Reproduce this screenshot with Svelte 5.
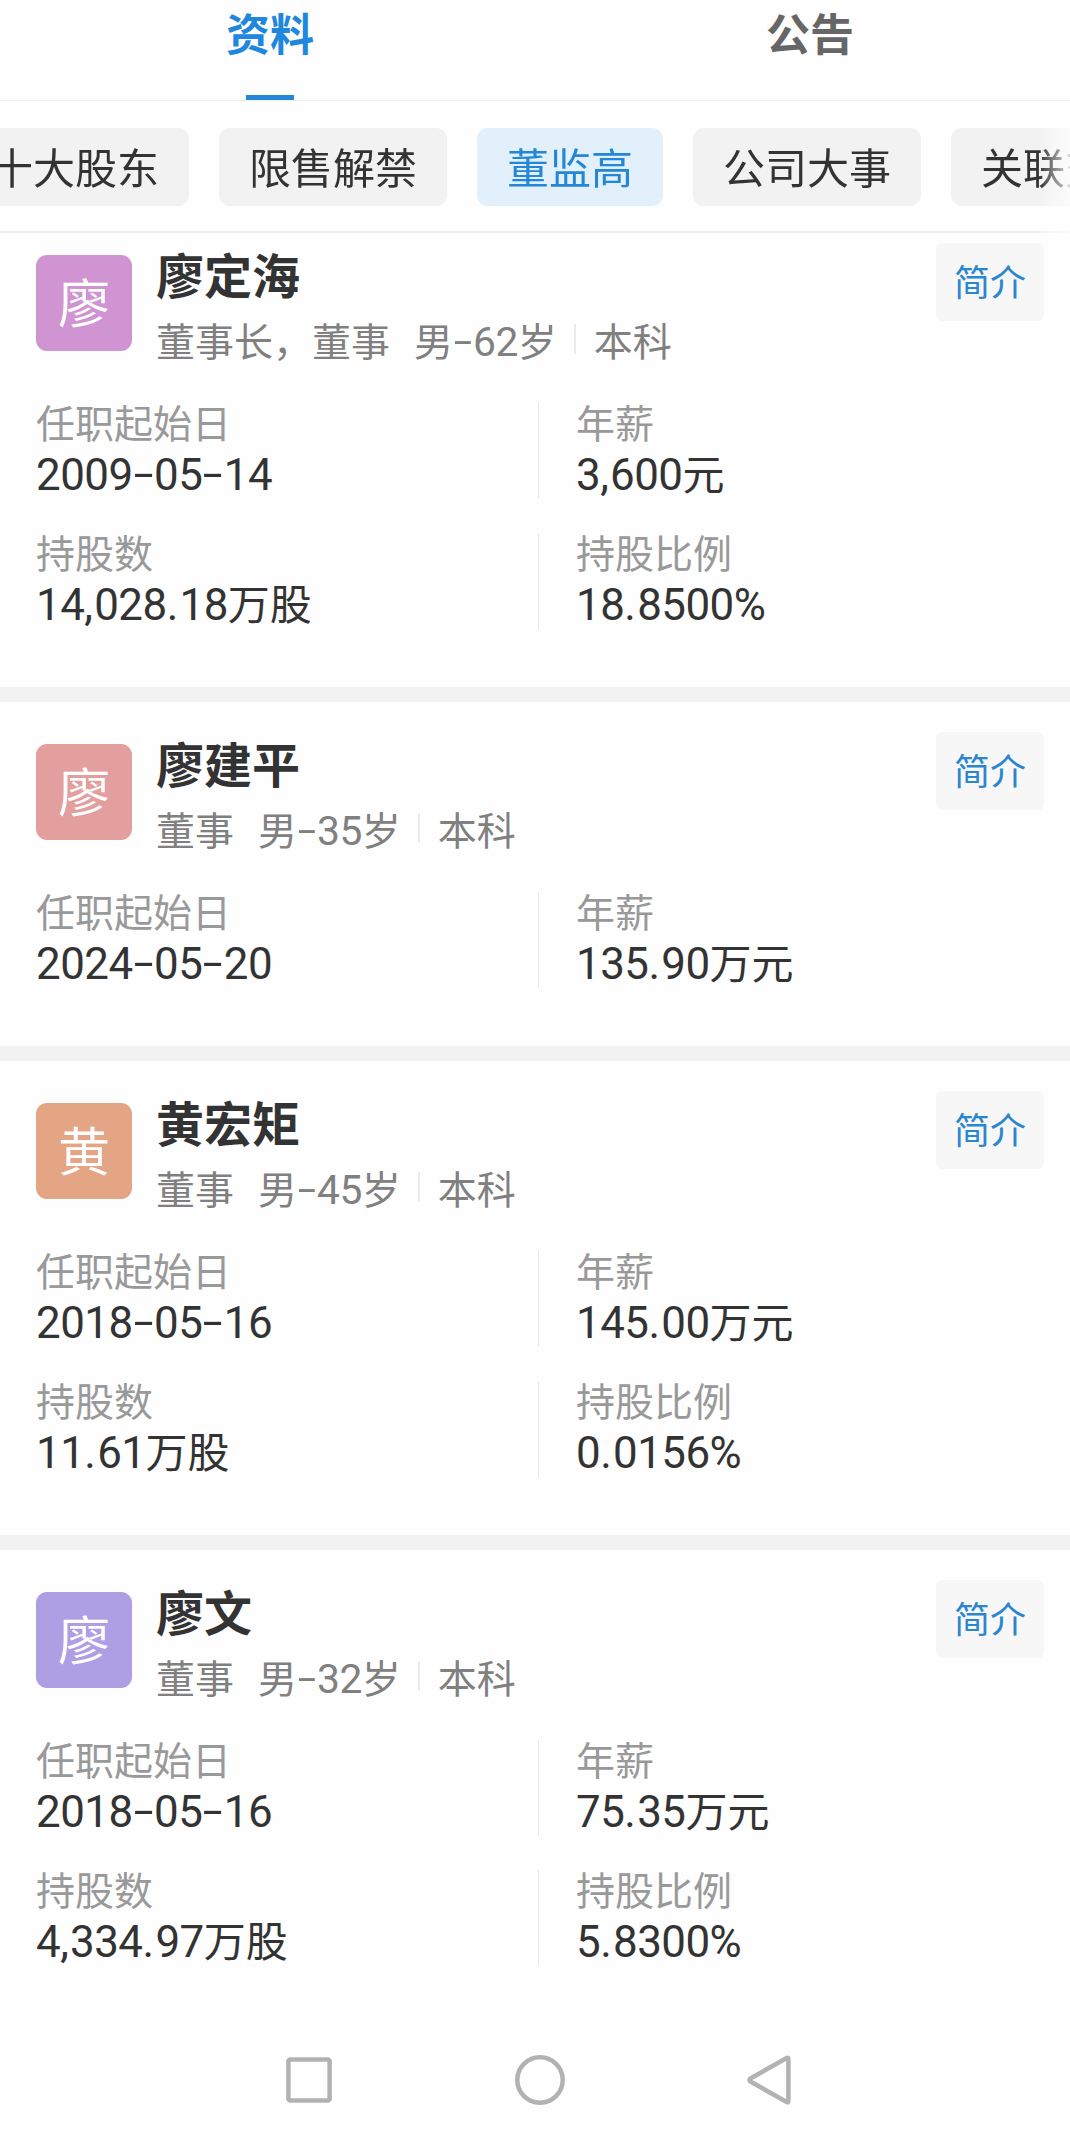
<script lang="ts">
    type Person = {
        name: string;
        color: string;
        title: string;
        age: string;
        degree: string;
        rows: { label: string; value: string }[][];
    };

    const tabs = ['资料', '公告'];
    const chips = ['十大股东', '限售解禁', '董监高', '公司大事', '关联交易'];

    let activeTab = $state('资料');
    let activeChip = $state('董监高');

    function makeRows(start: string, salary: string, shares = '', ratio = '') {
        const rows = [
            [
                { label: '任职起始日', value: start },
                { label: '年薪', value: salary }
            ]
        ];
        if (shares) {
            rows.push([
                { label: '持股数', value: shares },
                { label: '持股比例', value: ratio }
            ]);
        }
        return rows;
    }

    const people: Person[] = [
        {
            name: '廖定海',
            color: '#d094d3',
            title: '董事长，董事',
            age: '男-62岁',
            degree: '本科',
            rows: makeRows('2009-05-14', '3,600元', '14,028.18万股', '18.8500%')
        },
        {
            name: '廖建平',
            color: '#e39e9e',
            title: '董事',
            age: '男-35岁',
            degree: '本科',
            rows: makeRows('2024-05-20', '135.90万元')
        },
        {
            name: '黄宏矩',
            color: '#e4a585',
            title: '董事',
            age: '男-45岁',
            degree: '本科',
            rows: makeRows('2018-05-16', '145.00万元', '11.61万股', '0.0156%')
        },
        {
            name: '廖文',
            color: '#ae9ee3',
            title: '董事',
            age: '男-32岁',
            degree: '本科',
            rows: makeRows('2018-05-16', '75.35万元', '4,334.97万股', '5.8300%')
        }
    ];

    // split into runs of digits, points, dashes and everything else
    function runs(text: string) {
        return text.match(/[\d%]+|[.,]|-|[^\d.,%-]+/g) ?? [];
    }
</script>

{#snippet mixed(text: string)}
    {#each runs(text) as run}<span class:num={/^[\d%.,]/.test(run)} class:point={/^[.,]/.test(run)} class:dash={run === '-'}>{run}</span>{/each}
{/snippet}

<div class="screen">
    <div class="page">
        <div class="tabs">
            {#each tabs as tab}
                <button class="tab" class:active={tab === activeTab} onclick={() => (activeTab = tab)}>{tab}</button>
            {/each}
        </div>

        <div class="chips">
            {#each chips as chip}
                <button class="chip" class:active={chip === activeChip} onclick={() => (activeChip = chip)}>{chip}</button>
            {/each}
        </div>

        <div class="list">
            {#each people as person}
                <div class="card">
                    <div class="head">
                        <div class="avatar" style="background-color: {person.color}">{person.name[0]}</div>
                        <div class="who">
                            <div class="name">{person.name}</div>
                            <div class="meta">
                                <span class="title">{person.title}</span>
                                <span class="age">{@render mixed(person.age)}</span>
                                <span class="degree">{person.degree}</span>
                            </div>
                        </div>
                        <button class="intro">简介</button>
                    </div>
                    <div class="rows">
                        {#each person.rows as row}
                            <div class="row">
                                {#each row as cell}
                                    <div class="cell">
                                        <div class="label">{cell.label}</div>
                                        <div class="value">{@render mixed(cell.value)}</div>
                                    </div>
                                {/each}
                            </div>
                        {/each}
                    </div>
                </div>
            {/each}
        </div>

        <div class="navbar">
            <svg width="46" height="46" viewBox="0 0 46 46"><rect x="2.4" y="2.4" width="41.2" height="41.2" rx="2" /></svg>
            <svg width="50" height="50" viewBox="0 0 50 50"><circle cx="25" cy="25" r="22.7" /></svg>
            <svg width="44" height="50" viewBox="0 0 44 50"><path d="M40.2 2.8 3.8 23.2Q1.2 25 3.8 26.8L40.2 47.2Q41.4 47.6 41.4 46V4Q41.4 2.4 40.2 2.8Z" /></svg>
        </div>
    </div>
</div>

<style>
    :global(body) {
        background-color: #fefefe;
    }

    .screen {
        height: 2137px;
        overflow: hidden;
        font-family: "Noto Sans CJK SC", sans-serif;
        color: #333;
    }

    .page {
        width: 1080px;
    }

    button {
        padding: 0;
        border: none;
        background: none;
        font-family: inherit;
        cursor: pointer;
    }

    .tabs {
        display: flex;
        height: 100px;
        border-bottom: 1px solid #ebedee;
    }

    .tab {
        flex: 1;
        display: flex;
        flex-direction: column;
        align-items: center;
        justify-content: space-between;
        font-size: 44px;
        line-height: 64px;
        font-weight: bold;
        color: #666;
    }

    .tab.active {
        color: #1f87dd;
    }

    .tab.active::after {
        content: '';
        width: 48px;
        height: 5px;
        background-color: #2486d6;
    }

    .chips {
        display: flex;
        gap: 30px;
        height: 78px;
        padding: 27px 0 25px;
        margin-left: -39px;
        border-bottom: 2px solid #f1f1f1;
        -webkit-mask-image: linear-gradient(to right, #000 1078px, transparent 1116px);
        mask-image: linear-gradient(to right, #000 1078px, transparent 1116px);
    }

    .chip {
        flex: none;
        padding: 0 30px 2px;
        border-radius: 11px;
        background-color: #f2f2f2;
        font-size: 42px;
        line-height: 76px;
        color: #333;
    }

    .chip.active {
        background-color: #e2f0fb;
        color: #2486d6;
    }

    /* list is scrolled a little under the chip bar */
    .list {
        margin-top: -20px;
    }

    .card {
        padding: 30px 36px 58px;
        border-bottom: 15px solid #f2f2f2;
    }

    .card:last-child {
        border-bottom: none;
    }

    .head {
        display: flex;
        height: 160px;
    }

    .avatar {
        width: 96px;
        height: 96px;
        margin: 12px 24px 0 0;
        border-radius: 11px;
        font-size: 52px;
        line-height: 92px;
        text-align: center;
        color: #fff;
    }

    .who {
        flex: 1;
    }

    .name {
        font-size: 48px;
        line-height: 60px;
        font-weight: bold;
    }

    .meta {
        display: flex;
        align-items: center;
        margin-top: 4px;
        font-size: 39px;
        line-height: 64px;
        color: #808080;
    }

    .age {
        margin-left: 24px;
        white-space: nowrap;
    }

    .degree {
        display: flex;
        align-items: center;
    }

    .degree::before {
        content: '';
        width: 2px;
        height: 30px;
        margin: 0 18px 0 17px;
        background-color: #ebebeb;
    }

    .intro {
        width: 108px;
        height: 78px;
        padding-bottom: 3px;
        border-radius: 6px;
        background-color: #f7f7f7;
        font-size: 36px;
        line-height: 75px;
        color: #2a86cf;
    }

    .rows {
        display: flex;
        flex-direction: column;
        gap: 34px;
    }

    .row {
        display: flex;
        height: 96px;
    }

    .cell {
        width: 502px;
    }

    .cell + .cell {
        width: auto;
        padding-left: 37px;
        border-left: 1px solid #e8e8e8;
    }

    .label {
        font-size: 39px;
        line-height: 36px;
        color: #999;
    }

    .value {
        font-size: 42px;
        line-height: 66px;
        white-space: nowrap;
    }

    .num {
        font-family: Roboto, sans-serif;
        font-size: 1.045em;
        line-height: 1;
        letter-spacing: -0.012em;
    }

    .point {
        letter-spacing: 0.03em;
    }

    .dash {
        display: inline-block;
        width: 0.512em;
        line-height: 1;
        font-family: Roboto, sans-serif;
        text-align: center;
        transform: translateY(-2px) scaleX(1.7);
    }

    .navbar {
        display: flex;
        align-items: center;
        height: 112px;
        padding-left: 286px;
    }

    .navbar svg {
        fill: none;
        stroke: #b2b2b2;
        stroke-width: 4.5;
        stroke-linejoin: round;
    }

    .navbar svg + svg {
        margin-left: 183px;
    }

    .navbar svg:last-child {
        margin-left: 182px;
    }
</style>
